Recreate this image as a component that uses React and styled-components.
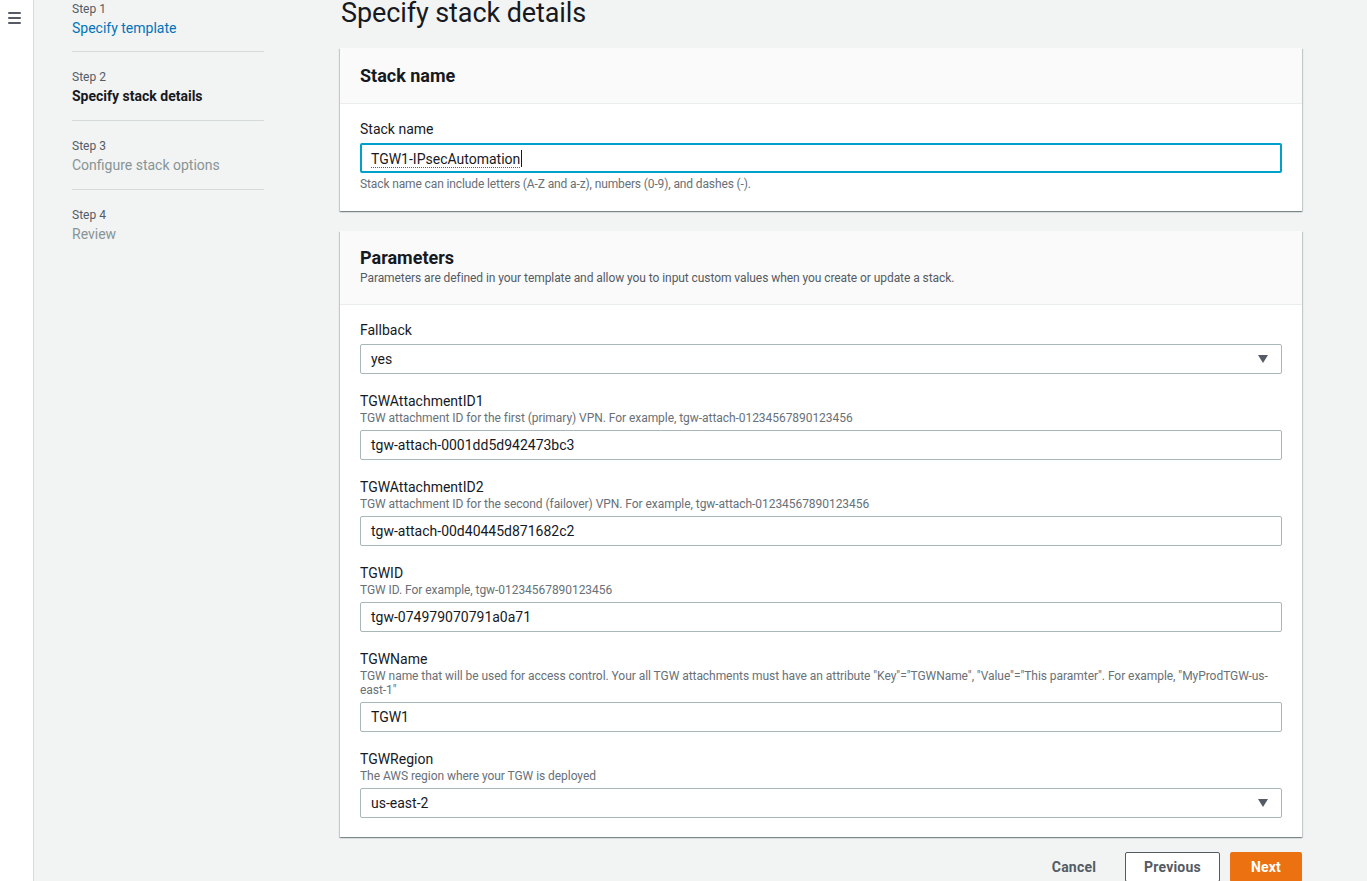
import React from "react";
import styled, { createGlobalStyle } from "styled-components";

const Global = createGlobalStyle`
  html, body { margin: 0; padding: 0; background: #f2f3f3; }
  body { font-family: Roboto, "Noto Sans", Arial, sans-serif; color: #16191f; overflow: hidden; }
  * { box-sizing: border-box; }
`;

const Page = styled.div`
  display: flex;
  height: 881px;
  overflow: hidden;
`;

const SideRail = styled.div`
  width: 34px;
  flex: none;
  background: #fff;
  border-right: 1px solid #d5dbdb;
  padding: 12px 0 0 8px;
`;

const Burger = styled.div`
  width: 13px;
  display: flex;
  flex-direction: column;
  gap: 3px;
  span { display: block; height: 2px; background: #545b64; border-radius: 1px; }
`;

const Nav = styled.nav`
  width: 192px;
  margin-left: 38px;
  flex: none;
`;

const StepItem = styled.div`
  padding: ${(p) => (p.$first ? "0 0 13px" : "16px 0 14px")};
  border-bottom: ${(p) => (p.$last ? "none" : "1px solid #d5dbdb")};
`;

const StepNum = styled.div`
  font-size: 12px;
  line-height: 18px;
  color: #545b64;
`;

const StepLabel = styled.div`
  font-size: 14px;
  line-height: 20px;
  color: ${(p) => (p.$state === "done" ? "#0073bb" : p.$state === "active" ? "#16191f" : "#879596")};
  font-weight: ${(p) => (p.$state === "active" ? 700 : 400)};
`;

const Main = styled.main`
  width: 962px;
  margin-left: 76px;
  flex: none;
`;

const Title = styled.h1`
  margin: -5px 0 0 1px;
  font-size: 27px;
  line-height: 36px;
  font-weight: 400;
  color: #16191f;
  letter-spacing: -0.1px;
`;

const Panel = styled.section`
  background: #fff;
  margin-top: ${(p) => p.$mt || 0}px;
  box-shadow: 0 1px 1px 0 rgba(0, 28, 36, 0.3), 1px 1px 1px 0 rgba(0, 28, 36, 0.15),
    -1px 1px 1px 0 rgba(0, 28, 36, 0.15);
`;

const PanelHeader = styled.header`
  background: #fafafa;
  border-bottom: 1px solid #eaeded;
  padding: ${(p) => (p.$desc ? "16px 20px 17px" : "17px 20px 16px")};
`;

const PanelTitle = styled.h2`
  margin: 0;
  font-size: 18px;
  line-height: 22px;
  font-weight: 700;
  color: #16191f;
`;

const PanelDesc = styled.div`
  font-size: 12px;
  line-height: 18px;
  color: #545b64;
  letter-spacing: -0.07px;
`;

const PanelBody = styled.div`
  padding: ${(p) => p.$pad || "15px 20px 19px"};
  display: flex;
  flex-direction: column;
  gap: 17px;
`;

const Field = styled.div`
  display: flex;
  flex-direction: column;
`;

const Label = styled.label`
  font-size: 14px;
  line-height: 20px;
  color: #16191f;
`;

const Desc = styled.div`
  font-size: 12px;
  line-height: 14px;
  color: #687078;
  letter-spacing: -0.05px;
`;

const Hint = styled.div`
  font-size: 12px;
  line-height: 16px;
  color: #687078;
  margin-top: 3px;
  letter-spacing: -0.12px;
`;

const Control = styled.div`
  margin-top: ${(p) => (p.$afterDesc ? 5 : 4)}px;
  height: 30px;
  border: ${(p) => (p.$focus ? "2px solid #00a1c9" : "1px solid #aab7b8")};
  border-radius: 2px;
  background: #fff;
  display: flex;
  align-items: center;
  padding: 0 ${(p) => (p.$focus ? "9px" : "10px")};
  font-size: 14px;
  color: #16191f;
`;

const Value = styled.span`
  flex: 1;
  white-space: nowrap;
`;

const Misspelled = styled.span`
  text-decoration: underline dotted #d13212;
  text-underline-offset: 3px;
  text-decoration-thickness: 1px;
`;

const Caret = styled.span`
  display: inline-block;
  width: 1px;
  height: 17px;
  background: #16191f;
  vertical-align: -3px;
  margin-left: 1px;
`;

const Arrow = styled.svg`
  width: 10px;
  height: 8px;
  margin-right: 3px;
  flex: none;
`;

const Actions = styled.div`
  display: flex;
  justify-content: flex-end;
  align-items: center;
  gap: 10px;
  margin-top: 15px;
`;

const Btn = styled.button`
  font-family: inherit;
  font-size: 14px;
  font-weight: 700;
  height: 30px;
  padding: 0 ${(p) => p.$px || 18}px;
  border-radius: 2px;
  letter-spacing: 0.2px;
  cursor: pointer;
  border: ${(p) =>
    p.$variant === "primary" ? "1px solid #ec7211" : p.$variant === "link" ? "1px solid transparent" : "1px solid #545b64"};
  background: ${(p) => (p.$variant === "primary" ? "#ec7211" : p.$variant === "link" ? "transparent" : "#fff")};
  color: ${(p) => (p.$variant === "primary" ? "#fff" : "#545b64")};
`;

const steps = [
  { n: "Step 1", label: "Specify template", state: "done" },
  { n: "Step 2", label: "Specify stack details", state: "active" },
  { n: "Step 3", label: "Configure stack options", state: "todo" },
  { n: "Step 4", label: "Review", state: "todo" },
];

const params = [
  { label: "Fallback", value: "yes", select: true },
  {
    label: "TGWAttachmentID1",
    desc: "TGW attachment ID for the first (primary) VPN. For example, tgw-attach-01234567890123456",
    value: "tgw-attach-0001dd5d942473bc3",
  },
  {
    label: "TGWAttachmentID2",
    desc: "TGW attachment ID for the second (failover) VPN. For example, tgw-attach-01234567890123456",
    value: "tgw-attach-00d40445d871682c2",
  },
  { label: "TGWID", desc: "TGW ID. For example, tgw-01234567890123456", value: "tgw-074979070791a0a71" },
  {
    label: "TGWName",
    desc:
      'TGW name that will be used for access control. Your all TGW attachments must have an attribute "Key"="TGWName", "Value"="This paramter". For example, "MyProdTGW-us-east-1"',
    value: "TGW1",
  },
  { label: "TGWRegion", desc: "The AWS region where your TGW is deployed", value: "us-east-2", select: true },
];

function SelectArrow() {
  return (
    <Arrow viewBox="0 0 10 8">
      <path d="M0 0 H10 L5 8 Z" fill="#545b64" />
    </Arrow>
  );
}

export default function App() {
  return (
    <Page>
      <Global />
      <SideRail>
        <Burger>
          <span />
          <span />
          <span />
        </Burger>
      </SideRail>
      <Nav>
        {steps.map((s, i) => (
          <StepItem key={s.n} $first={i === 0} $last={i === steps.length - 1}>
            <StepNum>{s.n}</StepNum>
            <StepLabel $state={s.state}>{s.label}</StepLabel>
          </StepItem>
        ))}
      </Nav>
      <Main>
        <Title>Specify stack details</Title>
        <Panel $mt={17}>
          <PanelHeader>
            <PanelTitle>Stack name</PanelTitle>
          </PanelHeader>
          <PanelBody $pad="15px 20px 19px">
            <Field>
              <Label>Stack name</Label>
              <Control $focus>
                <Value>
                  <Misspelled>TGW1-IPsecAutomation</Misspelled>
                  <Caret />
                </Value>
              </Control>
              <Hint>Stack name can include letters (A-Z and a-z), numbers (0-9), and dashes (-).</Hint>
            </Field>
          </PanelBody>
        </Panel>
        <Panel $mt={20}>
          <PanelHeader $desc>
            <PanelTitle>Parameters</PanelTitle>
            <PanelDesc>
              Parameters are defined in your template and allow you to input custom values when you create or update a
              stack.
            </PanelDesc>
          </PanelHeader>
          <PanelBody>
            {params.map((p) => (
              <Field key={p.label}>
                <Label>{p.label}</Label>
                {p.desc && <Desc>{p.desc}</Desc>}
                <Control $afterDesc={!!p.desc}>
                  <Value>{p.value}</Value>
                  {p.select && <SelectArrow />}
                </Control>
              </Field>
            ))}
          </PanelBody>
        </Panel>
        <Actions>
          <Btn $variant="link">Cancel</Btn>
          <Btn>Previous</Btn>
          <Btn $variant="primary" $px={20}>
            Next
          </Btn>
        </Actions>
      </Main>
    </Page>
  );
}
